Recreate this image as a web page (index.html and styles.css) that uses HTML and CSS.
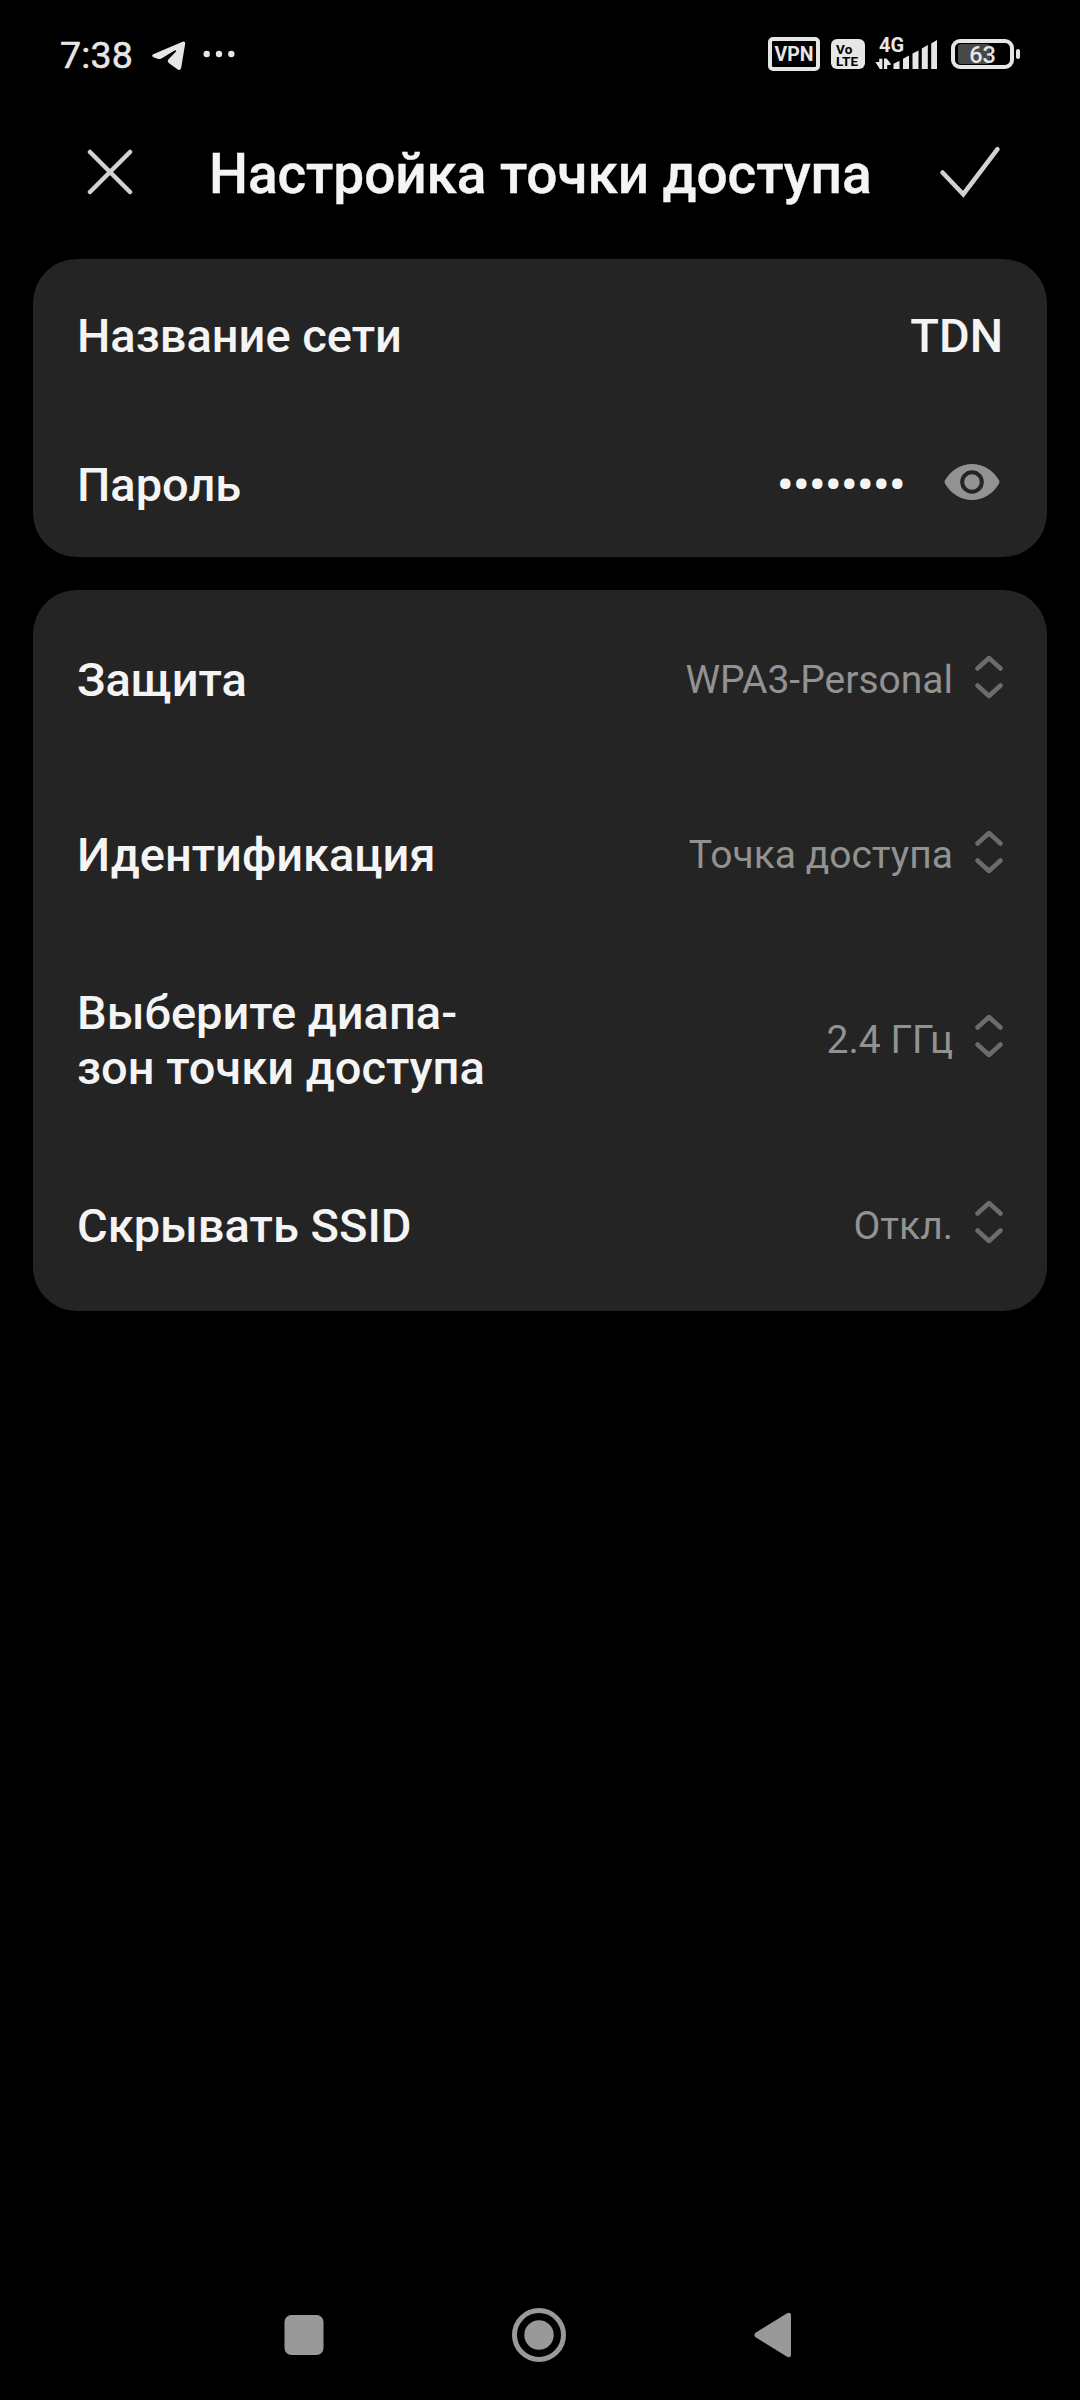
FILE: index.html
```html
<!DOCTYPE html>
<html lang="ru">
<head>
<meta charset="utf-8">
<title>Настройка точки доступа</title>
<link rel="stylesheet" href="styles.css">
</head>
<body>
<div class="screen">
  <header class="status">
    <span class="clock">7:38</span>
    <svg class="telegram" width="34" height="30" viewBox="0 0 34 30"><path d="M1.2 13.2 30.6.8Q33.4 0 33.2 2.6L29.2 26.8Q28.5 30 25.8 28.4L17 22.2Q14.6 20.4 16.6 18.2L24 10.6Q24.6 8.8 22.6 9.6L9.4 17.4Q7.4 18.2 5.6 17.8L1.4 16.2Q-1 14.8 1.2 13.2Z"/></svg>
    <svg class="more" width="32" height="8" viewBox="0 0 32 8"><circle cx="3.7" cy="4" r="3.2"/><circle cx="16" cy="4" r="3.2"/><circle cx="28.3" cy="4" r="3.2"/></svg>
    <span class="vpn">VPN</span>
    <span class="volte"><span>Vo</span><span>LTE</span></span>
    <span class="signal">
      <svg width="64" height="32" viewBox="0 0 64 32"><path d="M.4 24H4.2V20.8H7.4V31H4.8ZM9 20.4H11.6L15.6 25.6V27H12.2V31H9Z"/><path d="M18.5 31V25.8L24.5 22.8V31ZM28 31V20.8L34 17.6V31ZM37.5 31V15.6L43.5 12.4V31ZM46.8 31V10.6L52.8 7V31ZM56.2 31V5.6L62 2V31Z"/></svg>
      <span class="network">4G</span>
    </span>
    <span class="battery"><span class="charge"></span><span class="percent">63</span></span>
    <span class="tip"></span>
  </header>

  <div class="bar">
    <svg class="close" width="46" height="46" viewBox="0 0 46 46"><path d="M3 3 43 43M43 3 3 43"/></svg>
    <h1 class="title">Настройка точки доступа</h1>
    <svg class="accept" width="62" height="52" viewBox="0 0 62 52"><path d="M3.5 26.5 24.3 48.2 58.5 3.2"/></svg>
  </div>

  <main class="cards">
    <section class="card">
      <div class="row row-short"><span class="label">Название сети</span><span class="label">TDN</span></div>
      <div class="row row-short"><span class="label">Пароль</span><span class="label dots">••••••••</span>
        <svg class="eye" width="56" height="38" viewBox="0 0 56 38"><path d="M1 17.2C7 7.5 16.5 1 28 1S49 7.5 55 17.2Q56 19 55 20.8C49 30.5 39.5 37 28 37S7 30.5 1 20.8Q0 19 1 17.2Z"/><circle cx="28" cy="19" r="9.8"/></svg>
      </div>
    </section>
    <section class="card">
      <div class="row"><span class="label">Защита</span><span class="value">WPA3-Personal</span><svg class="pick" width="28" height="44" viewBox="0 0 28 44"><path d="M2.5 13.5 14 3 25.5 13.5M2.5 30.5 14 41 25.5 30.5"/></svg></div>
      <div class="row"><span class="label">Идентификация</span><span class="value">Точка доступа</span><svg class="pick" width="28" height="44" viewBox="0 0 28 44"><path d="M2.5 13.5 14 3 25.5 13.5M2.5 30.5 14 41 25.5 30.5"/></svg></div>
      <div class="row row-tall"><span class="label">Выберите диапа-<br>зон точки доступа</span><span class="value">2.4 ГГц</span><svg class="pick" width="28" height="44" viewBox="0 0 28 44"><path d="M2.5 13.5 14 3 25.5 13.5M2.5 30.5 14 41 25.5 30.5"/></svg></div>
      <div class="row row-last"><span class="label">Скрывать SSID</span><span class="value">Откл.</span><svg class="pick" width="28" height="44" viewBox="0 0 28 44"><path d="M2.5 13.5 14 3 25.5 13.5M2.5 30.5 14 41 25.5 30.5"/></svg></div>
    </section>
  </main>

  <nav class="nav">
    <svg width="40" height="40" viewBox="0 0 40 40"><rect x=".5" width="39" height="40" rx="7"/></svg>
    <svg width="54" height="54" viewBox="0 0 54 54"><circle class="ring" cx="27" cy="27" r="24.5"/><circle cx="27" cy="27" r="14.7"/></svg>
    <svg width="38" height="46" viewBox="0 0 38 46"><path d="M1.2 21 33.5.9Q37 0 37 3V43Q37 46 33.5 45.1L1.2 25Q-.5 23 1.2 21Z"/></svg>
  </nav>
</div>
</body>
</html>
```
FILE: styles.css
```css
* { box-sizing: border-box; }
body { margin: 0; background: #000; }
.screen {
  width: 1080px;
  height: 2400px;
  display: flex;
  flex-direction: column;
  overflow: hidden;
  background: #000;
  color: #f4f4f4;
  font-family: Roboto, "Noto Sans", sans-serif;
}
svg { display: block; flex: none; }

.status {
  display: flex;
  align-items: center;
  height: 110px;
  padding: 0 60px 2px 60px;
  color: #e6e6e6;
  fill: #e6e6e6;
}
.clock { font-size: 37.5px; line-height: 44px; width: 92px; padding-top: 2px; letter-spacing: .2px; -webkit-text-stroke: .5px #e6e6e6; }
.telegram { margin-top: 3px; }
.more { margin-left: 17px; }
.vpn {
  margin-left: auto;
  width: 52px;
  height: 34px;
  border: 4px solid #e6e6e6;
  border-radius: 5px;
  font-size: 19.5px;
  font-weight: 700;
  line-height: 27px;
  text-align: center;
}
.volte {
  margin-left: 11px;
  width: 34px;
  height: 30px;
  border-radius: 6px;
  background: #e6e6e6;
  color: #000;
  font-size: 13.5px;
  font-weight: 700;
  line-height: 12px;
  letter-spacing: .2px;
  padding: 4px 0 0 5px;
  display: flex;
  flex-direction: column;
}
.signal { position: relative; margin-left: 10px; }
.network { position: absolute; left: 4px; top: -5px; font-size: 20px; font-weight: 700; line-height: 24px; }
.battery {
  position: relative;
  margin-left: 12px;
  width: 63px;
  height: 30px;
  border: 4px solid #e6e6e6;
  border-radius: 9px;
  text-align: center;
}
.charge { position: absolute; left: 3px; top: 1px; width: 32px; height: 20px; border-radius: 3px; background: #484848; }
.percent { position: relative; font-size: 23.5px; line-height: 24px; font-weight: 500; display: block; }
.tip { width: 4px; height: 10px; margin-left: 2px; border-radius: 2px; background: #e6e6e6; }

.bar {
  display: flex;
  align-items: center;
  height: 124px;
  padding: 0 79px 0 87px;
}
.close, .accept { margin-top: -1px; fill: none; stroke: #d2d2d2; stroke-width: 4.5; stroke-linecap: round; }
.accept { margin-left: auto; }
.title {
  margin: 0 0 0 76px;
  padding-top: 4px;
  font-size: 55px;
  font-weight: 500;
  line-height: 64px;
  letter-spacing: -.1px;
  white-space: nowrap;
  -webkit-text-stroke: .4px #f4f4f4;
}

.cards { display: flex; flex-direction: column; gap: 33px; padding: 25px 33px 0; }
.card { background: #242424; border-radius: 44px; padding: 0 44px; }
.row { display: flex; align-items: center; justify-content: space-between; height: 175px; }
.row-short { height: 149px; }
.row-tall { height: 194px; }
.row-last { height: 177px; }
.label { padding-top: 4px; font-size: 47px; font-weight: 500; line-height: 55px; white-space: nowrap; }
.row-tall .label, .row-last .label { padding-top: 6px; }
.dots { margin-left: auto; letter-spacing: -.44px; }
.eye { margin: -2px 3px 0 39px; fill: #929292; }
.eye circle { stroke: #242424; stroke-width: 4; }
.value { margin-left: auto; padding-top: 6px; font-size: 39px; line-height: 47px; color: #929292; }
.row-last .value { padding-top: 7px; }
.pick { margin: -2px 0 0 22px; fill: none; stroke: #6c6c6c; stroke-width: 4.5; stroke-linecap: round; stroke-linejoin: round; }

.nav {
  display: flex;
  align-items: center;
  justify-content: space-between;
  height: 130px;
  margin-top: auto;
  padding: 0 288px 0 284px;
  fill: #999;
}
.ring { fill: none; stroke: #999; stroke-width: 5; }
```
